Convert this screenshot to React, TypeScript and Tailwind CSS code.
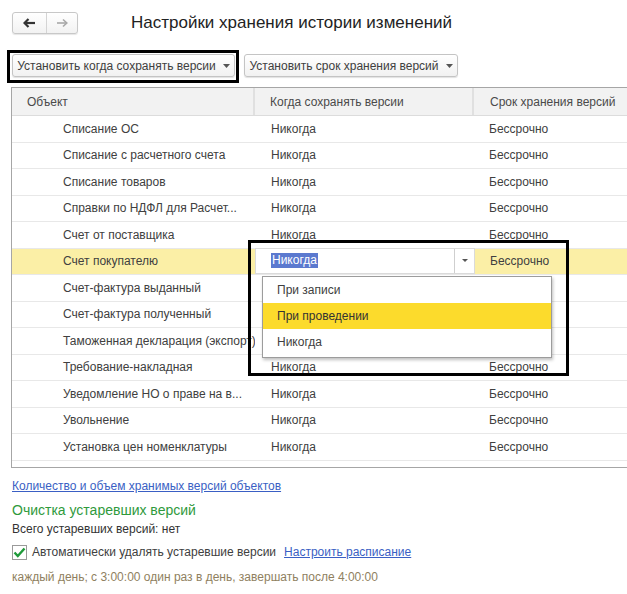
import React from "react";

const rows: { name: string; when: string; term: string }[] = [
  { name: "Списание ОС", when: "Никогда", term: "Бессрочно" },
  { name: "Списание с расчетного счета", when: "Никогда", term: "Бессрочно" },
  { name: "Списание товаров", when: "Никогда", term: "Бессрочно" },
  { name: "Справки по НДФЛ для Расчет...", when: "Никогда", term: "Бессрочно" },
  { name: "Счет от поставщика", when: "Никогда", term: "Бессрочно" },
  { name: "Счет покупателю", when: "Никогда", term: "Бессрочно" },
  { name: "Счет-фактура выданный", when: "", term: "" },
  { name: "Счет-фактура полученный", when: "", term: "" },
  { name: "Таможенная декларация (экспорт)", when: "", term: "" },
  { name: "Требование-накладная", when: "Никогда", term: "Бессрочно" },
  { name: "Уведомление НО о праве на в...", when: "Никогда", term: "Бессрочно" },
  { name: "Увольнение", when: "Никогда", term: "Бессрочно" },
  { name: "Установка цен номенклатуры", when: "Никогда", term: "Бессрочно" },
];

function Caret() {
  return (
    <svg width="7" height="4" viewBox="0 0 7 4" className="ml-[7px] shrink-0">
      <path d="M0 0 L7 0 L3.5 4 Z" fill="#555" />
    </svg>
  );
}

function ToolButton({ label, width }: { label: string; width: string }) {
  return (
    <div
      className={`${width} h-[23px] flex items-center justify-center whitespace-nowrap rounded-[3px] border border-[#c4c4c4] bg-gradient-to-b from-white to-[#f1f1f1] shadow-[0_1px_1px_rgba(0,0,0,0.12)] text-[12px] text-[#404040]`}
    >
      <span>{label}</span>
      <Caret />
    </div>
  );
}

export default function App() {
  return (
    <div
      className="relative w-[627px] h-[594px] overflow-hidden bg-white text-[#404040]"
      style={{ fontFamily: '"Liberation Sans", Arial, sans-serif' }}
    >
      {/* Header */}
      <div className="flex items-center pt-[12px] pl-[12px]">
        <div className="flex w-[66px] h-[22px] rounded-[3px] border border-[#c8c8c8] bg-gradient-to-b from-white to-[#f2f2f2] shadow-[0_1px_1px_rgba(0,0,0,0.1)]">
          <div className="w-[34px] flex items-center justify-center border-r border-[#d4d4d4]">
            <svg width="13" height="10" viewBox="0 0 13 10">
              <path d="M12 5 H3" stroke="#333" strokeWidth="2.2" />
              <path d="M5.5 1 L1.5 5 L5.5 9" stroke="#333" strokeWidth="2.2" fill="none" />
            </svg>
          </div>
          <div className="flex-1 flex items-center justify-center">
            <svg width="13" height="10" viewBox="0 0 13 10">
              <path d="M1 5 H10" stroke="#a8a8a8" strokeWidth="1.6" />
              <path d="M7 1.5 L10.8 5 L7 8.5" stroke="#a8a8a8" strokeWidth="1.6" fill="none" />
            </svg>
          </div>
        </div>
        <div className="ml-[53px] text-[17px] text-[#222] leading-[22px] whitespace-nowrap">
          Настройки хранения истории изменений
        </div>
      </div>

      {/* Toolbar */}
      <div className="flex gap-[9px] pl-[12px] mt-[20px]">
        <ToolButton label="Установить когда сохранять версии" width="w-[223px]" />
        <ToolButton label="Установить срок хранения версий" width="w-[214px]" />
      </div>

      {/* Table */}
      <div className="ml-[11px] mt-[10px] w-[625px] border-l border-t border-b border-[#a6a6a6] text-[12px]">
        <div className="flex h-[28px] bg-[#f2f2f2] border-b border-[#dcdcdc] text-[#4a4a4a] whitespace-nowrap">
          <div className="w-[243px] pl-[15px] flex items-center border-r-2 border-[#e0e0e0]">Объект</div>
          <div className="w-[219px] pl-[15px] flex items-center border-r-2 border-[#e0e0e0]">
            Когда сохранять версии
          </div>
          <div className="flex-1 pl-[16px] flex items-center">Срок хранения версий</div>
        </div>
        <div className="h-[351px]">
          {rows.map((r, i) => {
            const selected = i === 5;
            return (
              <div
                key={r.name}
                className={`flex h-[26.5px] border-b border-[#e8e8e8] whitespace-nowrap ${selected ? "bg-[#fbefa6]" : ""}`}
              >
                <div className="w-[243px] pl-[51px] flex items-center overflow-hidden">{r.name}</div>
                {selected ? (
                  <div className="w-[220px] flex bg-white border border-[#dadada] -mt-[1px]">
                    <div className="flex-1 pl-[15px] flex items-center">
                      <span className="bg-[#5b79cf] text-white px-[1px] leading-[15px]">Никогда</span>
                    </div>
                    <div className="w-[20px] border-l border-[#cfcfcf] flex items-center justify-center">
                      <svg width="6" height="3" viewBox="0 0 6 3">
                        <path d="M0 0 L6 0 L3 3 Z" fill="#555" />
                      </svg>
                    </div>
                  </div>
                ) : (
                  <div className="w-[219px] pl-[16px] flex items-center">{r.when}</div>
                )}
                <div className="flex-1 pl-[15px] flex items-center">{r.term}</div>
              </div>
            );
          })}
        </div>
      </div>

      {/* Bottom section */}
      <div className="pl-[12px] whitespace-nowrap">
        <div className="mt-[10px] text-[12px] leading-[16px] text-[#3a5fc4] underline">
          Количество и объем хранимых версий объектов
        </div>
        <div className="mt-[6px] text-[14px] leading-[20px] text-[#2f9a3c]">Очистка устаревших версий</div>
        <div className="mt-[1px] text-[12px] leading-[16px] text-[#333]">Всего устаревших версий: нет</div>
        <div className="mt-[6px] flex items-center h-[18px] text-[12px]">
          <div className="w-[15px] h-[15px] border border-[#9a9a9a] bg-white flex items-center justify-center">
            <svg width="13" height="11" viewBox="0 0 13 11">
              <path d="M1.5 5.5 L4.8 9 L11.5 1.5" stroke="#1f9a3a" strokeWidth="2.4" fill="none" />
            </svg>
          </div>
          <span className="ml-[5px] text-[#404040]">Автоматически удалять устаревшие версии</span>
          <span className="ml-[8px] text-[#3a5fc4] underline">Настроить расписание</span>
        </div>
        <div className="mt-[8px] text-[12px] leading-[16px] text-[#8f7f60]">
          каждый день; с 3:00:00 один раз в день, завершать после 4:00:00
        </div>
      </div>

      {/* Dropdown list overlay */}
      <div className="absolute left-[262px] top-[276px] w-[290px] h-[82px] bg-white border border-[#9c9c9c] shadow-[1px_2px_3px_rgba(0,0,0,0.25)] text-[12px] text-[#404040]">
        <div className="h-[26px] pl-[14px] flex items-center">При записи</div>
        <div className="h-[26px] pl-[14px] flex items-center bg-[#fcdb2c] text-[#333]">При проведении</div>
        <div className="h-[26px] pl-[14px] flex items-center">Никогда</div>
      </div>

      {/* Annotation boxes */}
      <div className="absolute left-[7px] top-[50px] w-[232px] h-[33px] border-[3px] border-black" />
      <div className="absolute left-[248px] top-[240px] w-[321px] h-[136px] border-[3px] border-black" />
    </div>
  );
}
